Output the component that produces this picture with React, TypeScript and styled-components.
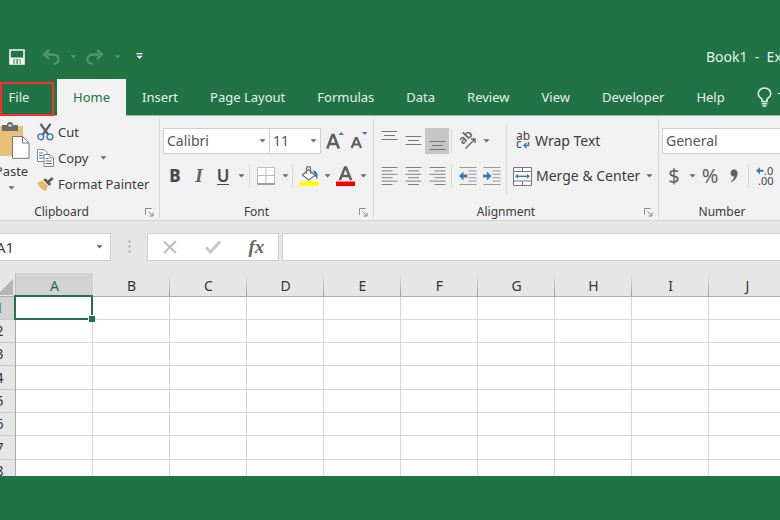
import React from "react";
import styled, { createGlobalStyle, css } from "styled-components";

const GREEN = "#217346";
const INK = "#3b3b3b";
const GLYPH = "#5f5f5f";
const BLUE = "#3b78b8";

const GlobalStyle = createGlobalStyle`
  * { box-sizing: border-box; }
  body {
    margin: 0;
    background: ${GREEN};
    color: ${INK};
    font-family: "Noto Sans", "Open Sans", sans-serif;
    font-size: 13px;
    line-height: 18px;
  }
  button, input, select { font: inherit; color: inherit; }
`;

const Page = styled.div`
  display: flex;
  height: 100vh;
  padding-bottom: 44px;
  overflow: hidden;
`;

/* The workbook window runs past both edges of the page. */
const Workbook = styled.main`
  flex: none;
  width: calc(100% + 136px);
  display: flex;
  flex-direction: column;
  margin-left: -16px;
  overflow: hidden;
`;

const plainButton = css`
  display: inline-flex;
  align-items: center;
  justify-content: center;
  border: 0;
  padding: 0;
  background: none;
  cursor: pointer;
`;

/* ---------- title bar ---------- */

const TitleBar = styled.header`
  display: flex;
  align-items: center;
  flex: none;
  height: 79px;
  padding: 34px 0 0 21px;
  color: #e6f1ea;
`;

const QuickButton = styled.button<{ $wide?: boolean; $faded?: boolean }>`
  ${plainButton}
  width: ${(p) => (p.$wide ? 24 : 20)}px;
  height: 24px;
  color: ${(p) => (p.$faded ? "#4f9570" : "#f3f8f5")};
`;

const QuickGap = styled.span<{ $size: number }>`
  width: ${(p) => p.$size}px;
`;

const DocumentTitle = styled.h1`
  margin: 0 0 0 auto;
  flex: 0 0 194px;
  font-size: 14px;
  font-weight: 400;
  white-space: pre;
`;

/* ---------- tabs ---------- */

const TabBar = styled.nav`
  display: flex;
  flex: none;
  height: 37px;
  border-bottom: 1px solid #8dbda0;
`;

const Tab = styled.button<{ $active?: boolean }>`
  ${plainButton}
  height: ${(p) => (p.$active ? 37 : 36)}px;
  padding: 0 16px ${(p) => (p.$active ? 2 : 0)}px;
  gap: 6px;
  white-space: nowrap;
  color: ${(p) => (p.$active ? GREEN : "#e6f1ea")};
  background: ${(p) => (p.$active ? "#f1f1f1" : "none")};
`;

const FileTab = styled(Tab)`
  position: relative;
  width: 70px;
  margin-right: 3px;
  &::after {
    content: "";
    position: absolute;
    inset: 3px 0 -1px 16px;
    border: 2px solid #f5302d;
  }
`;

/* ---------- ribbon ---------- */

const Ribbon = styled.section`
  display: flex;
  flex: none;
  height: 105px;
  padding: 3px 0 2px;
  background: #f1f1f1;
  border-bottom: 1px solid #d4d4d4;
`;

const Group = styled.section<{ $width: number }>`
  display: flex;
  flex-direction: column;
  flex: none;
  width: ${(p) => p.$width}px;
  border-right: 1px solid #d6d6d6;
`;

const GroupBody = styled.div`
  display: flex;
  flex: 1;
`;

const GroupFooter = styled.div`
  display: flex;
  align-items: center;
  height: 18px;
  margin-bottom: -3px;
  font-size: 12px;
  h2 {
    flex: 1;
    margin: 0;
    text-align: center;
    font-size: 12px;
    font-weight: 400;
  }
`;

const Launcher = styled.button`
  ${plainButton}
  width: 20px;
  height: 16px;
`;

const PasteButton = styled.button`
  ${plainButton}
  flex-direction: column;
  justify-content: flex-start;
  width: 53px;
  padding: 3px 0 0 2px;
  svg + span { margin-top: 3px; }
  span + svg { margin-top: 6px; }
`;

const Stack = styled.div`
  display: flex;
  flex-direction: column;
`;

const LineButton = styled.button`
  ${plainButton}
  justify-content: flex-start;
  height: 26px;
  gap: 4px;
  white-space: nowrap;
`;

const CaretSlot = styled.span<{ $gap: number }>`
  display: inline-flex;
  margin-left: ${(p) => p.$gap}px;
`;

const TwoRows = styled.div<{ $left?: number }>`
  display: flex;
  flex-direction: column;
  gap: 9px;
  padding: 9px 0 0 ${(p) => p.$left ?? 3}px;
`;

const ToolRow = styled.div`
  display: flex;
  align-items: center;
  height: 26px;
`;

const ToolButton = styled.button<{ $w?: number; $pressed?: boolean }>`
  ${plainButton}
  width: ${(p) => p.$w ?? 24}px;
  height: 26px;
  color: ${GLYPH};
  background: ${(p) => (p.$pressed ? "#c6c6c6" : "none")};
`;

const Letter = styled.span<{ $kind: "b" | "i" | "u" | "sym" }>`
  font-size: 17px;
  line-height: 20px;
  color: #4a4a4a;
  ${(p) => p.$kind === "b" && css`font-weight: 800;`}
  ${(p) =>
    p.$kind === "i" &&
    css`
      font-family: "Liberation Serif", serif;
      font-style: italic;
      font-weight: 700;
      font-size: 19px;
      color: ${GLYPH};
    `}
  ${(p) =>
    p.$kind === "u" &&
    css`
      font-weight: 600;
      line-height: 16px;
      border-bottom: 1px solid #4a4a4a;
    `}
  ${(p) => p.$kind === "sym" && css`font-size: 20px; color: ${GLYPH};`}
`;

const Divider = styled.span`
  width: 1px;
  height: 24px;
  margin: 0 2px;
  background: #d9d9d9;
`;

const SelectBox = styled.label<{ $w: number }>`
  display: grid;
  align-items: center;
  width: ${(p) => p.$w}px;
  height: 26px;
  border: 1px solid #cfcfcf;
  background: #fff;
  & + & { border-left: 0; }
  select {
    grid-area: 1 / 1;
    width: 100%;
    height: 24px;
    padding: 0 3px;
    border: 0;
    background: none;
    appearance: none;
    color: #555;
    font-size: 14px;
  }
  svg {
    grid-area: 1 / 1;
    justify-self: end;
    margin-right: 3px;
    pointer-events: none;
  }
`;

const WrapColumn = styled(TwoRows)`
  margin: 5px 0 8px 4px;
  padding-top: 4px;
  border-left: 1px solid #d9d9d9;
  font-size: 14px;
`;

/* ---------- formula bar ---------- */

const FormulaBar = styled.section`
  display: flex;
  flex: none;
  align-items: center;
  height: 52px;
  padding-bottom: 1px;
  background: #e6e6e6;
`;

const FieldBox = styled.div<{ $w?: number }>`
  display: flex;
  align-items: center;
  height: 28px;
  border: 1px solid #cfcfcf;
  background: #fff;
  ${(p) => (p.$w ? `width: ${p.$w}px;` : "flex: 1;")}
`;

const TextField = styled.input`
  flex: 1;
  min-width: 0;
  height: 26px;
  padding: 0 0 0 11px;
  border: 0;
  background: none;
  outline: 0;
  color: #444;
  font-size: 15px;
`;

const Grip = styled.span`
  display: flex;
  justify-content: center;
  width: 36px;
`;

const FieldButton = styled.button`
  ${plainButton}
  flex: 1;
  height: 26px;
`;

const FxLabel = styled.span`
  font-family: "Liberation Serif", serif;
  font-style: italic;
  font-weight: 700;
  font-size: 19px;
  color: #666;
`;

/* ---------- sheet ---------- */

const SheetArea = styled.section`
  flex: 1;
  min-height: 0;
  overflow: hidden;
  background: #fff;
`;

const Sheet = styled.table`
  width: max-content;
  table-layout: fixed;
  border-spacing: 0;
  font-size: 14px;
  line-height: 18px;
  tbody tr { height: 23px; }
  tbody tr:nth-child(3n + 4) { height: 24px; }
`;

const ColumnHead = styled.th<{ $selected?: boolean }>`
  width: 77px;
  height: 24px;
  padding: 3px 0 0;
  font-weight: 400;
  color: ${(p) => (p.$selected ? GREEN : "#333")};
  background: ${(p) =>
    p.$selected ? "#d2d2d2" : "linear-gradient(#e6e6e6, #9c9c9c) right / 1px 100% no-repeat #e6e6e6"};
  border-bottom: 1px solid #ababab;
`;

const Corner = styled.th`
  width: 32px;
  height: 24px;
  padding: 4px 2px 0 0;
  background: #e6e6e6;
  border-right: 1px solid #bdbdbd;
  border-bottom: 1px solid #ababab;
  svg { display: block; margin-left: auto; }
`;

const RowHead = styled.th<{ $selected?: boolean }>`
  padding: 0;
  font-weight: 400;
  color: ${(p) => (p.$selected ? GREEN : "#333")};
  background: ${(p) => (p.$selected ? "#d2d2d2" : "#e6e6e6")};
  border-right: 1px solid #ababab;
  border-bottom: 1px solid #c9c9c9;
`;

const Cell = styled.td<{ $selected?: boolean }>`
  padding: 0;
  border-right: 1px solid #d6d6d6;
  border-bottom: 1px solid #d6d6d6;
  ${(p) =>
    p.$selected &&
    css`
      position: relative;
      &::before {
        content: "";
        position: absolute;
        inset: -2px -1px -1px -2px;
        border: 2px solid ${GREEN};
      }
      &::after {
        content: "";
        position: absolute;
        right: -3px;
        bottom: -3px;
        width: 6px;
        height: 6px;
        background: ${GREEN};
        border: 1px solid #fff;
        border-width: 1px 0 0 1px;
      }
    `}
`;

/* ---------- icons ---------- */

const Caret = ({ color = "#666" }: { color?: string }) => (
  <svg width="7" height="4" viewBox="0 0 7 4"><path d="M0.5 0.3h6L3.5 3.6z" fill={color} /></svg>
);

const SaveIcon = () => (
  <svg width="16" height="16" viewBox="0 0 16 16">
    <path d="M1 1h14v14H1z" fill="none" stroke="currentColor" strokeWidth="1.6" />
    <path d="M1 8.5h14V15H1z" fill="currentColor" />
    <path d="M4.5 10.5h7V15h-7z" fill={GREEN} />
    <path d="M5.5 11h2v4h-2z M8.7 11h2v4h-2z" fill="currentColor" />
  </svg>
);

const UndoIcon = ({ flip }: { flip?: boolean }) => (
  <svg width="18" height="16" viewBox="0 0 18 16">
    <g transform={flip ? "matrix(-1 0 0 1 18 0)" : undefined} fill="none" stroke="currentColor" strokeWidth="2.3">
      <path d="M7 0.800 2 5.500 7 10.200" />
      <path d="M2 5.500h8.500c8 0 8 9.300 1 9.300" />
    </g>
  </svg>
);

const CustomizeIcon = () => (
  <svg width="7" height="7" viewBox="0 0 7 7">
    <path d="M0.500 0h6v1.300h-6z M0.500 2.700h6L3.500 6z" fill="currentColor" />
  </svg>
);

const BulbIcon = () => (
  <svg width="15" height="20" viewBox="0 0 15 20" fill="none" stroke="currentColor" strokeWidth="1.500">
    <path d="M5 14.500v-2.300C3 10.800 1.200 9 1.200 6.800a6.300 5.900 0 0 1 12.600 0C13.800 9 12 10.800 10 12.200v2.300z" />
    <path d="M4.800 16.700h5.400M5.500 19h4" />
  </svg>
);

const LauncherIcon = () => (
  <svg width="9" height="9" viewBox="0 0 9 9" fill="none" stroke="#888">
    <path d="M0.500 6.500v-6h6" />
    <path d="M3.500 3.500 8 8M8 4.500V8H4.500" />
  </svg>
);

const PasteIcon = () => (
  <svg width="36" height="37" viewBox="0 0 36 37">
    <path d="M0 4h29v30H0z" fill="#e9c07a" />
    <path d="M8 3h5a3 3 0 0 1 6 0h5v6H8z" fill="#6b6b6b" />
    <path d="M14.500 2.500h3v2h-3z" fill="#f1f1f1" />
    <path d="M18.500 14.500h10l6.500 6.500v15.300H18.500z" fill="#fff" stroke="#777" />
    <path d="M28.500 14.500V21H35" fill="none" stroke="#777" />
  </svg>
);

const CutIcon = () => (
  <svg width="17" height="18" viewBox="0 0 17 18" fill="none">
    <path d="M3.500 0.800 11.500 12M13.500 0.800 5.500 12" stroke="#5c5c5c" strokeWidth="2.200" />
    <circle cx="3.800" cy="13.800" r="2.900" stroke={BLUE} strokeWidth="1.400" />
    <circle cx="13" cy="13.800" r="2.900" stroke={BLUE} strokeWidth="1.400" />
  </svg>
);

const CopyIcon = () => (
  <svg width="17" height="18" viewBox="0 0 17 18" fill="#fff" stroke="#888">
    <path d="M0.500 0.500h6.500l3 3v9H0.500z" />
    <path d="M2 4h4M2 6.500h5M2 9h5" stroke={BLUE} />
    <path d="M7 5.500h6l3.500 3.500v8.500H7z" />
    <path d="M13 5.500V9h3.500" />
    <path d="M8.700 9.500h3M8.700 12h6M8.700 14.500h6" stroke={BLUE} />
  </svg>
);

const BrushIcon = () => (
  <svg width="17" height="16" viewBox="0 0 18 16">
    <path d="M0.300 6.500 6 4.200l5.800 5.600-2.600 5.700C5.500 14.500 2 11 0.300 6.500z" fill="#e8b96a" />
    <path d="M6.500 3.500 9 1.800l6 6.200-2.300 2z" fill="#5c5c5c" />
    <path d="m10.500 5 5-4.500 2.200 2.300-5 4.400z" fill="#5c5c5c" />
    <path d="m6.300 4.300 6 5.700" stroke="#f1f1f1" strokeWidth="0.800" />
  </svg>
);

const SizeIcon = ({ down }: { down?: boolean }) => (
  <svg width="18" height="20" viewBox="0 0 18 20">
    <path
      d={down ? "M1.600 17 5.800 7h1L11 17M3.200 13.500h6.200" : "M1.300 17.500 6.400 4h1.200L12.800 17.500M3.200 13h7.800"}
      fill="none" stroke={GLYPH} strokeWidth={down ? 2.2 : 2.6}
    />
    <path d={down ? "M12 1h5.500l-2.700 3z" : "M12.500 4H18l-2.700-3z"} fill={BLUE} />
  </svg>
);

const BordersIcon = () => (
  <svg width="18" height="18" viewBox="0 0 18 18" fill="none" stroke="#bdbdbd">
    <path d="M0.500 0.500h17v16.500H0.500z M9 0.500V17 M0.500 8.500h17" fill="#fff" />
    <path d="M0 17h18" stroke="#888" strokeWidth="1.400" />
  </svg>
);

const FillIcon = () => (
  <svg width="20" height="20" viewBox="0 0 20 20">
    <path d="M9.500 3.500 16 9.500 9.500 14 3.500 9z" fill="#fff" stroke="#777" strokeWidth="1.300" />
    <path d="M7.500 8V2.500a2 2 0 0 1 4 0V8" fill="none" stroke="#777" strokeWidth="1.300" />
    <path d="M13.500 4.500c5 0 6 4 4.500 9-1-2-2-3.300-2-5z" fill={BLUE} />
    <path d="M0.500 15.500h19V20h-19z" fill="#ff0" />
  </svg>
);

const FontColorIcon = () => (
  <svg width="19" height="20" viewBox="0 0 19 20">
    <path d="M3.800 14.300 9 1.500h1l5.200 12.800M5.800 10h7.400" fill="none" stroke={GLYPH} strokeWidth="2.400" />
    <path d="M0 15.500h19V20H0z" fill="#f60000" />
  </svg>
);

const VAlignIcon = ({ shift }: { shift: number }) => (
  <svg width="17" height="20" viewBox="0 0 17 20" stroke="#777">
    <path d={`M0.500 ${shift + 0.5}h16M3 ${shift + 4.5}h11M0.500 ${shift + 8.5}h16`} />
  </svg>
);

const HAlignIcon = ({ mode }: { mode: "left" | "center" | "right" }) => {
  const x = { left: 0.5, center: 3, right: 5.5 }[mode];
  return (
    <svg width="17" height="18" viewBox="0 0 17 18" stroke="#808080">
      <path d={`M0.500 0.500h16M${x} 3.900h11M0.500 7.300h16M${x} 10.700h11M0.500 14.100h16M${x} 17.500h11`} />
    </svg>
  );
};

const IndentIcon = ({ more }: { more?: boolean }) => (
  <svg width="18" height="18" viewBox="0 0 18 18">
    <path d="M0.500 0.500h17M9.500 3.900h8M9.500 7.300h8M9.500 10.700h8M9.500 14.100h8M0.500 17.500h17" stroke="#999" />
    <path
      d={more ? "M8.500 9 4 4.500v3H0v3h4v3z" : "M0 9l4.500-4.500v3h4v3h-4v3z"}
      fill={BLUE}
    />
  </svg>
);

const OrientationIcon = () => (
  <svg width="18" height="18" viewBox="0 0 18 18">
    <text x="0" y="0" transform="translate(4 13) rotate(-45)" fontSize="12" fontWeight="600" fill={GLYPH}>ab</text>
    <path d="M6.500 16.500 15.500 7.500M16 11V7h-4" fill="none" stroke={GLYPH} strokeWidth="1.300" />
  </svg>
);

const WrapIcon = () => (
  <svg width="18" height="20" viewBox="-3 0 18 20">
    <text x="0" y="9" fontSize="12" fill="#444">ab</text>
    <text x="0" y="17" fontSize="12" fill="#444">c</text>
    <path d="M12.500 11v3.500H8M10.500 12 8 14.500l2.500 2.500" fill="none" stroke={BLUE} strokeWidth="1.400" />
  </svg>
);

const MergeIcon = () => (
  <svg width="19" height="19" viewBox="0 0 19 19">
    <path d="M0.500 0.500h18v18H0.500z M0.500 4.500h18M0.500 14h18M9.500 0.500v4M9.500 14v4.500" fill="#fff" stroke="#777" />
    <path d="M3 9.300h13" stroke={BLUE} strokeWidth="1.400" />
    <path d="M2 9.300 5 6.800v5zM17 9.300 14 6.800v5z" fill={BLUE} />
  </svg>
);

const DecimalIcon = () => (
  <svg width="19" height="20" viewBox="0 0 19 20">
    <path d="M0 4.700 4 1.200v2.500h3.500v2H4v2.500z" fill={BLUE} />
    <text x="8" y="9" fontSize="11" fill="#444">.0</text>
    <text x="2" y="19" fontSize="11" fill="#444">.00</text>
  </svg>
);

const CommaIcon = () => (
  <svg width="8" height="14" viewBox="0 0 8 14">
    <path d="M4 0.500a3.400 3.400 0 0 1 3.500 3.800c0 4-2.500 7.200-6 8.900l-.5-1c2-1.300 3-2.800 3.300-4.700A3.500 3.500 0 1 1 4 0.500z" fill={GLYPH} />
  </svg>
);

const GripIcon = () => (
  <svg width="3" height="13" viewBox="0 0 3 13" fill="#aaa">
    <path d="M0.500 0.500h2v2h-2zM0.500 5.500h2v2h-2zM0.500 10.500h2v2h-2z" />
  </svg>
);

const CancelIcon = () => (
  <svg width="14" height="14" viewBox="0 0 14 14"><path d="M1 1.500 13 13M13 1 1 13" stroke="#bdbdbd" strokeWidth="2" /></svg>
);

const CheckIcon = () => (
  <svg width="16" height="14" viewBox="0 0 16 14"><path d="M1 7.500 5.500 12 15 1.500" fill="none" stroke="#c6c6c6" strokeWidth="3" /></svg>
);

const CornerIcon = () => (
  <svg width="16" height="16" viewBox="0 0 16 16"><path d="M16 0v16H0z" fill="#b4b4b4" /></svg>
);

/* ---------- composition ---------- */

const MENU = ["Insert", "Page Layout", "Formulas", "Data", "Review", "View", "Developer", "Help"];
const COLUMNS = ["A", "B", "C", "D", "E", "F", "G", "H", "I", "J", "K"];
const ROWS = [1, 2, 3, 4, 5, 6, 7, 8];

const Footer = ({ title }: { title: string }) => (
  <GroupFooter>
    <h2>{title}</h2>
    <Launcher aria-label={`${title} settings`}><LauncherIcon /></Launcher>
  </GroupFooter>
);

const More = ({ label, w = 12 }: { label: string; w?: number }) => (
  <ToolButton $w={w} aria-label={label}><Caret /></ToolButton>
);

export default function App() {
  return (
    <>
      <GlobalStyle />
      <Page>
        <Workbook>
          <TitleBar>
            <QuickButton $wide aria-label="Save"><SaveIcon /></QuickButton>
            <QuickGap $size={10} />
            <QuickButton $wide $faded aria-label="Undo"><UndoIcon /></QuickButton>
            <QuickButton $faded aria-label="Undo history"><Caret color="#4f9570" /></QuickButton>
            <QuickButton $wide $faded aria-label="Redo"><UndoIcon flip /></QuickButton>
            <QuickButton $faded aria-label="Redo history"><Caret color="#4f9570" /></QuickButton>
            <QuickGap $size={2} />
            <QuickButton aria-label="Customize toolbar"><CustomizeIcon /></QuickButton>
            <DocumentTitle>Book1  -  Excel</DocumentTitle>
          </TitleBar>

          <TabBar>
            <FileTab>File</FileTab>
            <Tab $active>Home</Tab>
            {MENU.map((name) => <Tab key={name}>{name}</Tab>)}
            <Tab><BulbIcon />Tell me</Tab>
          </TabBar>

          <Ribbon>
            <Group $width={176}>
              <GroupBody>
                <PasteButton><PasteIcon /><span>Paste</span><Caret /></PasteButton>
                <Stack>
                  <LineButton><CutIcon />Cut</LineButton>
                  <LineButton><CopyIcon />Copy<CaretSlot $gap={8}><Caret /></CaretSlot></LineButton>
                  <LineButton><BrushIcon />Format Painter</LineButton>
                </Stack>
              </GroupBody>
              <Footer title="Clipboard" />
            </Group>

            <Group $width={214}>
              <GroupBody>
                <TwoRows>
                  <ToolRow>
                    <SelectBox $w={107}>
                      <select aria-label="Font name" defaultValue="Calibri"><option>Calibri</option></select>
                      <Caret />
                    </SelectBox>
                    <SelectBox $w={51}>
                      <select aria-label="Font size" defaultValue="11"><option>11</option></select>
                      <Caret />
                    </SelectBox>
                    <ToolButton $w={28} aria-label="Increase font size"><SizeIcon /></ToolButton>
                    <ToolButton $w={20} aria-label="Decrease font size"><SizeIcon down /></ToolButton>
                  </ToolRow>
                  <ToolRow>
                    <ToolButton aria-label="Bold"><Letter $kind="b">B</Letter></ToolButton>
                    <ToolButton aria-label="Italic"><Letter $kind="i">I</Letter></ToolButton>
                    <ToolButton aria-label="Underline"><Letter $kind="u">U</Letter></ToolButton>
                    <More label="Underline styles" />
                    <Divider />
                    <ToolButton $w={28} aria-label="Borders"><BordersIcon /></ToolButton>
                    <More label="Border styles" w={10} />
                    <Divider />
                    <ToolButton $w={28} aria-label="Fill color"><FillIcon /></ToolButton>
                    <More label="Fill colors" w={8} />
                    <ToolButton $w={28} aria-label="Font color"><FontColorIcon /></ToolButton>
                    <More label="Font colors" w={8} />
                  </ToolRow>
                </TwoRows>
              </GroupBody>
              <Footer title="Font" />
            </Group>

            <Group $width={285}>
              <GroupBody>
                <TwoRows>
                  <ToolRow>
                    <ToolButton aria-label="Top align"><VAlignIcon shift={0} /></ToolButton>
                    <ToolButton aria-label="Middle align"><VAlignIcon shift={5} /></ToolButton>
                    <ToolButton $pressed aria-label="Bottom align"><VAlignIcon shift={10} /></ToolButton>
                    <Divider />
                    <ToolButton $w={28} aria-label="Orientation"><OrientationIcon /></ToolButton>
                    <More label="Orientation options" w={8} />
                  </ToolRow>
                  <ToolRow>
                    <ToolButton aria-label="Align left"><HAlignIcon mode="left" /></ToolButton>
                    <ToolButton aria-label="Center"><HAlignIcon mode="center" /></ToolButton>
                    <ToolButton aria-label="Align right"><HAlignIcon mode="right" /></ToolButton>
                    <Divider />
                    <ToolButton $w={28} aria-label="Decrease indent"><IndentIcon /></ToolButton>
                    <ToolButton $w={20} aria-label="Increase indent"><IndentIcon more /></ToolButton>
                  </ToolRow>
                </TwoRows>
                <WrapColumn $left={6}>
                  <LineButton><WrapIcon />Wrap Text</LineButton>
                  <LineButton><MergeIcon />Merge &amp; Center<CaretSlot $gap={2}><Caret /></CaretSlot></LineButton>
                </WrapColumn>
              </GroupBody>
              <Footer title="Alignment" />
            </Group>

            <Group $width={147}>
              <GroupBody>
                <TwoRows>
                  <ToolRow>
                    <SelectBox $w={138}>
                      <select aria-label="Number format" defaultValue="General"><option>General</option></select>
                      <Caret />
                    </SelectBox>
                  </ToolRow>
                  <ToolRow>
                    <ToolButton aria-label="Currency"><Letter $kind="sym">$</Letter></ToolButton>
                    <More label="Currency formats" />
                    <ToolButton aria-label="Percent"><Letter $kind="sym">%</Letter></ToolButton>
                    <ToolButton aria-label="Comma style"><CommaIcon /></ToolButton>
                    <Divider />
                    <ToolButton $w={28} aria-label="Increase decimal"><DecimalIcon /></ToolButton>
                  </ToolRow>
                </TwoRows>
              </GroupBody>
              <Footer title="Number" />
            </Group>
          </Ribbon>

          <FormulaBar>
            <FieldBox $w={127}>
              <TextField aria-label="Name box" defaultValue="A1" />
              <ToolButton $w={22} aria-label="Named ranges"><Caret /></ToolButton>
            </FieldBox>
            <Grip><GripIcon /></Grip>
            <FieldBox $w={132}>
              <FieldButton aria-label="Cancel"><CancelIcon /></FieldButton>
              <FieldButton aria-label="Enter"><CheckIcon /></FieldButton>
              <FieldButton aria-label="Insert function"><FxLabel>fx</FxLabel></FieldButton>
            </FieldBox>
            <QuickGap $size={3} />
            <FieldBox><TextField aria-label="Formula" /></FieldBox>
          </FormulaBar>

          <SheetArea>
            <Sheet>
              <thead>
                <tr>
                  <Corner aria-label="Select all"><CornerIcon /></Corner>
                  {COLUMNS.map((c) => <ColumnHead key={c} scope="col" $selected={c === "A"}>{c}</ColumnHead>)}
                </tr>
              </thead>
              <tbody>
                {ROWS.map((r) => (
                  <tr key={r}>
                    <RowHead scope="row" $selected={r === 1}>{r}</RowHead>
                    {COLUMNS.map((c) => <Cell key={c} $selected={r === 1 && c === "A"} />)}
                  </tr>
                ))}
              </tbody>
            </Sheet>
          </SheetArea>
        </Workbook>
      </Page>
    </>
  );
}
